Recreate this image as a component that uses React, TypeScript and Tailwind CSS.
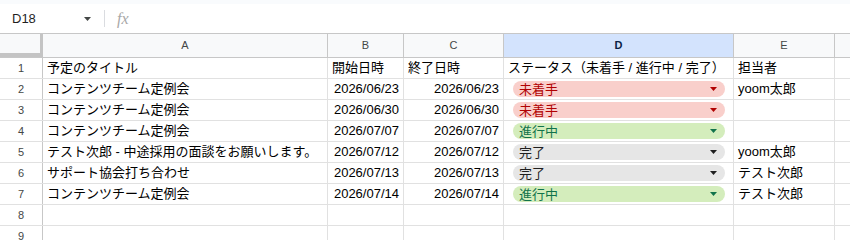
// Spreadsheet view: status column with dropdown chips

type Status = '未着手' | '進行中' | '完了';

interface Row {
  title: string;
  start: string;
  end: string;
  status?: Status;
  owner?: string;
}

const rows: Row[] = [
  { title: 'コンテンツチーム定例会', start: '2026/06/23', end: '2026/06/23', status: '未着手', owner: 'yoom太郎' },
  { title: 'コンテンツチーム定例会', start: '2026/06/30', end: '2026/06/30', status: '未着手' },
  { title: 'コンテンツチーム定例会', start: '2026/07/07', end: '2026/07/07', status: '進行中' },
  { title: 'テスト次郎 - 中途採用の面談をお願いします。', start: '2026/07/12', end: '2026/07/12', status: '完了', owner: 'yoom太郎' },
  { title: 'サポート協会打ち合わせ', start: '2026/07/13', end: '2026/07/13', status: '完了', owner: 'テスト次郎' },
  { title: 'コンテンツチーム定例会', start: '2026/07/14', end: '2026/07/14', status: '進行中', owner: 'テスト次郎' },
];

const chipStyles: Record<Status, { chip: string; arrow: string }> = {
  未着手: { chip: 'bg-[#f9cfcb] text-[#b10202]', arrow: '#b10202' },
  進行中: { chip: 'bg-[#d4edbc] text-[#11734b]', arrow: '#11734b' },
  完了: { chip: 'bg-[#e6e6e6] text-[#1f1f1f]', arrow: '#1f1f1f' },
};

const Caret = ({ color }: { color: string }) => (
  <svg width="7" height="4" viewBox="0 0 7 4">
    <path d="M0 0 L7 0 L3.5 4 Z" fill={color} />
  </svg>
);

const StatusChip = ({ status }: { status: Status }) => {
  const s = chipStyles[status];
  return (
    <div className={`ml-[9px] mr-[8px] flex h-[16px] flex-1 items-center justify-between rounded-full pl-[6px] pr-[8px] ${s.chip}`}>
      <span className="text-[13px] leading-none">{status}</span>
      <Caret color={s.arrow} />
    </div>
  );
};

const cell = 'flex h-full items-center border-r border-[#e1e1e1] text-[13px] text-black';

export default function App() {
  return (
    <div className="h-[240px] w-[850px] overflow-hidden bg-white font-['Liberation_Sans','Noto_Sans_CJK_JP',sans-serif]">
      {/* top strip */}
      <div className="h-[4px] bg-[#f9fbfd]" />

      {/* formula bar */}
      <div className="flex h-[30px] items-center border-b border-[#c7c7c7]">
        <span className="ml-[12px] w-[72px] text-[13px] text-[#1f1f1f]">D18</span>
        <Caret color="#444746" />
        <div className="ml-[13px] h-[17px] w-px bg-[#dadce0]" />
        <span className="ml-[12px] font-['Liberation_Serif',serif] text-[16px] italic text-[#a8a8a8]">fx</span>
      </div>

      {/* column headers */}
      <div className="flex h-[24px] border-b border-[#c7c7c7] text-[11px] text-[#444746]">
        <div className="h-full w-[43px] border-b-[4px] border-r-[3px] border-[#c4c4c4] bg-[#f8f9fa]" />
        <div className="flex h-full w-[285px] items-center justify-center border-r border-[#c7c7c7] bg-[#f8f9fa]">A</div>
        <div className="flex h-full w-[76px] items-center justify-center border-r border-[#c7c7c7] bg-[#f8f9fa]">B</div>
        <div className="flex h-full w-[100px] items-center justify-center border-r border-[#c7c7c7] bg-[#f8f9fa]">C</div>
        <div className="flex h-full w-[230px] items-center justify-center border-r border-[#c7c7c7] bg-[#d3e3fd] font-semibold text-[#0b1f45]">D</div>
        <div className="flex h-full w-[101px] items-center justify-center border-r border-[#c7c7c7] bg-[#f8f9fa]">E</div>
        <div className="h-full flex-1 bg-[#f8f9fa]" />
      </div>

      {/* row 1: headings */}
      <div className="flex h-[21px] border-b border-[#e1e1e1]">
        <div className="flex h-full w-[43px] items-center justify-center border-r border-[#c7c7c7] text-[11px] text-[#444746]">1</div>
        <div className={`${cell} w-[285px] pl-[4px]`}>予定のタイトル</div>
        <div className={`${cell} w-[76px] pl-[4px]`}>開始日時</div>
        <div className={`${cell} w-[100px] pl-[4px]`}>終了日時</div>
        <div className={`${cell} w-[230px] pl-[4px] whitespace-nowrap`}>ステータス（未着手 / 進行中 / 完了）</div>
        <div className={`${cell} w-[101px] pl-[4px]`}>担当者</div>
        <div className="h-full flex-1" />
      </div>

      {rows.map((r, i) => (
        <div key={i} className="flex h-[21px] border-b border-[#e1e1e1]">
          <div className="flex h-full w-[43px] items-center justify-center border-r border-[#c7c7c7] text-[11px] text-[#444746]">{i + 2}</div>
          <div className={`${cell} w-[285px] pl-[4px] whitespace-nowrap`}>{r.title}</div>
          <div className={`${cell} w-[76px] justify-end pr-[4px]`}>{r.start}</div>
          <div className={`${cell} w-[100px] justify-end pr-[4px]`}>{r.end}</div>
          <div className={`${cell} w-[230px]`}>{r.status && <StatusChip status={r.status} />}</div>
          <div className={`${cell} w-[101px] pl-[4px]`}>{r.owner}</div>
          <div className="h-full flex-1" />
        </div>
      ))}

      {[8, 9].map((n) => (
        <div key={n} className="flex h-[21px] border-b border-[#e1e1e1]">
          <div className="flex h-full w-[43px] items-center justify-center border-r border-[#c7c7c7] text-[11px] text-[#444746]">{n}</div>
          <div className={`${cell} w-[285px]`} />
          <div className={`${cell} w-[76px]`} />
          <div className={`${cell} w-[100px]`} />
          <div className={`${cell} w-[230px]`} />
          <div className={`${cell} w-[101px]`} />
          <div className="h-full flex-1" />
        </div>
      ))}
    </div>
  );
}
